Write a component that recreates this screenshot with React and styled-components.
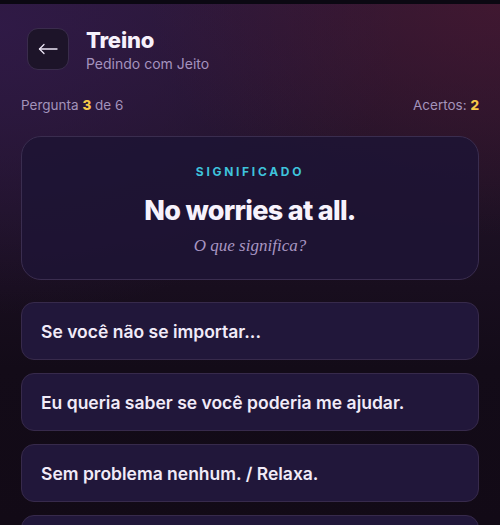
import React from "react";
import styled, { createGlobalStyle } from "styled-components";

const GlobalStyle = createGlobalStyle`
  html, body {
    margin: 0;
    padding: 0;
    height: 100%;
  }
  body {
    background: #140c19;
    font-family: Inter, "Open Sans", sans-serif;
    color: #f3eefa;
    overflow: hidden;
  }
`;

const options = [
  "Se você não se importar...",
  "Eu queria saber se você poderia me ajudar.",
  "Sem problema nenhum. / Relaxa.",
  "Obrigado pela paciência.",
];

function App() {
  return (
    <>
      <GlobalStyle />
      <Screen>
        <TopStrip />
        <Header>
          <BackButton aria-label="Voltar">
            <svg width="20" height="20" viewBox="0 0 20 20" fill="none" stroke="#ece5f5" strokeWidth="1.3" strokeLinecap="round" strokeLinejoin="round">
              <path d="M19 10H1.5" />
              <path d="M6 5.5L1.5 10L6 14.5" />
            </svg>
          </BackButton>
          <Titles>
            <Title>Treino</Title>
            <Subtitle>Pedindo com Jeito</Subtitle>
          </Titles>
        </Header>
        <Stats>
          <span>
            Pergunta <Num>3</Num> de 6
          </span>
          <span>
            Acertos: <Num>2</Num>
          </span>
        </Stats>
        <QuestionCard>
          <Label>SIGNIFICADO</Label>
          <Phrase>No worries at all.</Phrase>
          <Prompt>O que significa?</Prompt>
        </QuestionCard>
        <Options>
          {options.map((o) => (
            <Option key={o}>{o}</Option>
          ))}
        </Options>
      </Screen>
    </>
  );
}

export default App;

const Screen = styled.div`
  height: 525px;
  overflow: hidden;
  background:
    radial-gradient(ellipse 70% 45% at 100% 0%, rgba(72, 24, 48, 0.75), transparent 100%),
    radial-gradient(ellipse 80% 55% at 0% 5%, rgba(48, 26, 72, 0.9), transparent 100%),
    linear-gradient(180deg, #2a1733 0%, #1d1124 40%, #130b18 70%, #120a16 100%);
`;

const TopStrip = styled.div`
  height: 4px;
  background: #0b0812;
`;

const Header = styled.div`
  display: flex;
  align-items: flex-start;
  gap: 17px;
  padding: 24px 27px 0;
`;

const BackButton = styled.button`
  width: 42px;
  height: 42px;
  border-radius: 11px;
  border: 1px solid #3a2c4c;
  background: #1d1429;
  display: flex;
  align-items: center;
  justify-content: center;
  padding: 0;
  cursor: pointer;
`;

const Titles = styled.div`
  display: flex;
  flex-direction: column;
`;

const Title = styled.div`
  font-size: 22px;
  font-weight: 800;
  letter-spacing: -0.2px;
  color: #f6f1fb;
  line-height: 24px;
`;

const Subtitle = styled.div`
  font-size: 14px;
  color: #a593bf;
  line-height: 18px;
  margin-top: 3px;
`;

const Stats = styled.div`
  display: flex;
  justify-content: space-between;
  padding: 24px 21px 0 21px;
  font-size: 13.5px;
  line-height: 16px;
  color: #a393bb;
`;

const Num = styled.b`
  color: #f7c948;
  font-weight: 800;
`;

const QuestionCard = styled.div`
  margin: 23px 21px 0;
  height: 144px;
  box-sizing: border-box;
  border-radius: 20px;
  border: 1px solid #3a2d4f;
  background: rgba(30, 20, 52, 0.9);
  display: flex;
  flex-direction: column;
  align-items: center;
  padding-top: 28px;
`;

const Label = styled.div`
  font-size: 12px;
  font-weight: 700;
  letter-spacing: 2.7px;
  color: #3ec3dc;
  line-height: 14px;
`;

const Phrase = styled.div`
  font-size: 27px;
  font-weight: 800;
  letter-spacing: -0.7px;
  color: #f7f2fc;
  margin-top: 16px;
  line-height: 32px;
`;

const Prompt = styled.div`
  font-family: "Liberation Serif", "DejaVu Serif", serif;
  font-style: italic;
  font-size: 17px;
  color: #a896c2;
  margin-top: 9px;
`;

const Options = styled.div`
  display: flex;
  flex-direction: column;
  gap: 13px;
  margin: 22px 21px 0;
`;

const Option = styled.button`
  height: 58px;
  box-sizing: border-box;
  border-radius: 13px;
  border: 1px solid #372a4b;
  background: #21173a;
  color: #f1ebf8;
  font-family: Inter, "Open Sans", sans-serif;
  font-size: 17.5px;
  font-weight: 600;
  text-align: left;
  padding: 0 19px;
  cursor: pointer;
`;
